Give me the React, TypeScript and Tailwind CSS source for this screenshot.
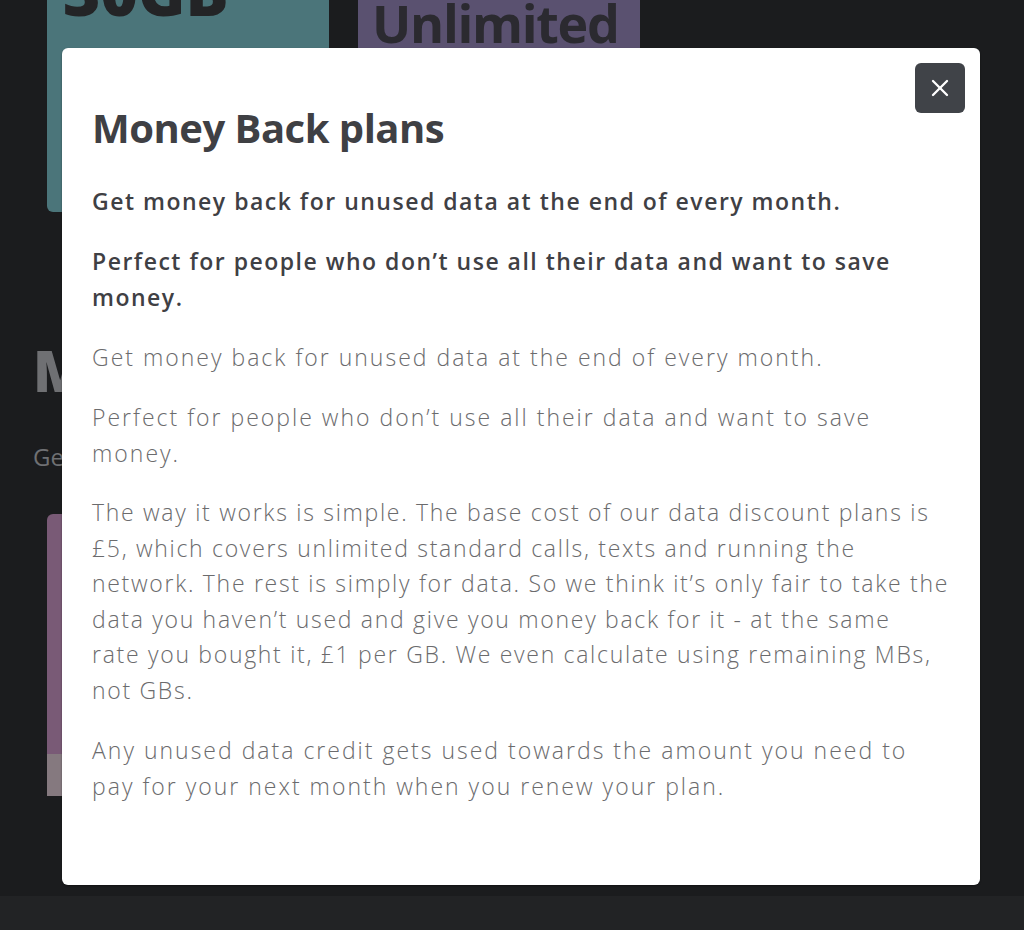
import { X } from "lucide-react";

const font = { fontFamily: '"Open Sans", "Noto Sans", sans-serif' };

const Backdrop = () => {
    return <div className="flex flex-col h-[896px] bg-[#1b1c1e] overflow-hidden">
        <div className="flex flex-row gap-[29px] pl-[47px] -mt-[50px]">
            <div className="w-[282px] h-[262px] bg-[#4b757a] rounded-b-md px-4 pt-[2px]">
                <p className="text-[64px] font-extrabold leading-[80px] text-[#232426]">30GB</p>
            </div>
            <div className="w-[282px] h-[150px] bg-[#5a5170] rounded-b-md px-[14px] pt-[38px]">
                <p className="text-[52px] font-bold leading-[70px] text-[#2b2a30] tracking-tight">Unlimited</p>
            </div>
        </div>
        <div className="pl-[33px] pt-[128px] flex flex-col">
            <h2 className="text-[56px] font-extrabold leading-[60px] text-[#6f7073]">Money Back plans</h2>
            <p className="text-[24px] leading-[32px] mt-[41px] text-[#6f7073]">Get money back for unused data</p>
        </div>
        <div className="ml-[47px] mt-[41px] w-[282px] h-[282px] flex flex-col rounded-t-md overflow-hidden">
            <div className="flex-1 bg-[#795a76]"></div>
            <div className="h-[42px] bg-[#85797f]"></div>
        </div>
    </div>
}

const Modal = () => {
    return <div className="absolute left-[62px] top-[48px] w-[918px] h-[837px] bg-white rounded-md shadow-[0_1px_2px_rgba(0,0,0,0.4)] pl-[30px] pr-[26px] pt-[56px]" style={font}>
        <button className="absolute right-[15px] top-[15px] w-[50px] h-[50px] rounded-md bg-[#404348] flex items-center justify-center">
            <X size={28} color="white" strokeWidth={2} />
        </button>
        <h1 className="text-[40px] leading-[48px] font-bold text-[#3f4044] tracking-[-0.5px]">Money Back plans</h1>
        <div className="flex flex-col gap-6 mt-[31px] text-[23px] leading-[36px]">
            <p className="font-semibold text-[#3f4044] tracking-[1.5px]">Get money back for unused data at the end of every month.</p>
            <p className="font-semibold text-[#3f4044] tracking-[1.5px]">Perfect for people who don’t use all their data and want to save money.</p>
            <p className="font-light text-[#6b6b6d] tracking-[2px]">Get money back for unused data at the end of every month.</p>
            <p className="font-light text-[#6b6b6d] tracking-[2px]">Perfect for people who don’t use all their data and want to save money.</p>
            <p className="font-light text-[#6b6b6d] tracking-[1.7px] leading-[35.5px]">The way it works is simple. The base cost of our data discount plans is £5, which covers unlimited standard calls, texts and running the network. The rest is simply for data. So we think it’s only fair to take the data you haven’t used and give you money back for it - at the same rate&nbsp;you bought it, £1 per GB. We even calculate using remaining MBs, not GBs.</p>
            <p className="font-light text-[#6b6b6d] tracking-[2px]">Any unused data credit gets used towards the amount you need to pay for your next month when you renew your plan.</p>
        </div>
    </div>
}

export default function App() {
    return <div className="relative w-[1024px] h-[930px] bg-[#222325] overflow-hidden" style={font}>
        <Backdrop />
        <Modal />
    </div>
}
